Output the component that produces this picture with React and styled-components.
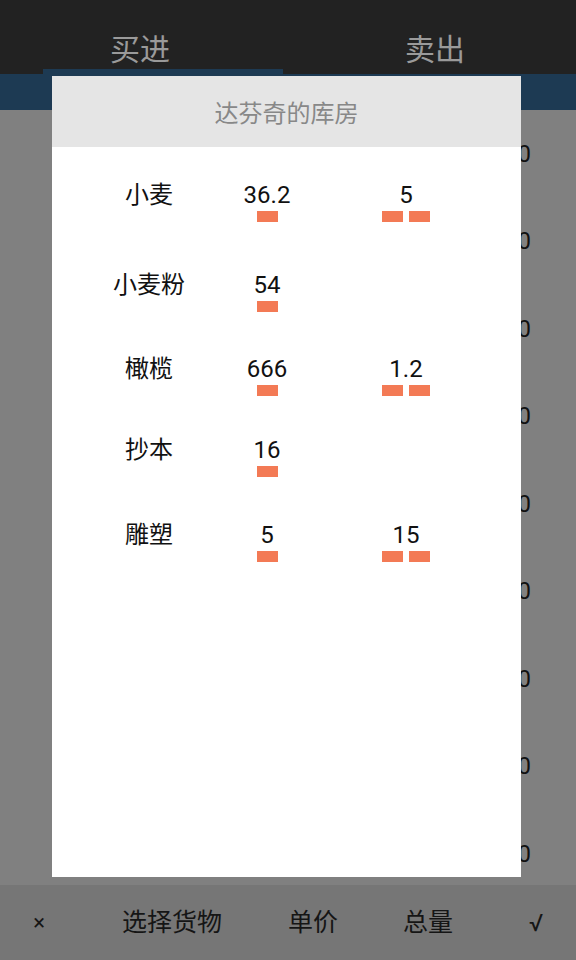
import React from "react";
import styled, { createGlobalStyle } from "styled-components";

const GlobalStyle = createGlobalStyle`
  html, body {
    margin: 0;
    padding: 0;
    background: #808080;
  }
  * {
    box-sizing: border-box;
  }
`;

const FONT = `Roboto, "Noto Sans CJK SC", sans-serif`;

const Page = styled.div`
  position: relative;
  width: 576px;
  height: 960px;
  display: flex;
  flex-direction: column;
  overflow: hidden;
  font-family: ${FONT};
  background: #808080;
`;

const TopBar = styled.div`
  height: 74px;
  display: flex;
  background: #222222;
`;

const Tab = styled.div`
  flex: 1;
  display: flex;
  flex-direction: column;
`;

const TabLabel = styled.div`
  height: 69px;
  padding-top: 32px;
  padding-left: ${(p) => p.$shift > 0 ? p.$shift : 0}px;
  padding-right: ${(p) => p.$shift < 0 ? -p.$shift : 0}px;
  text-align: center;
  font-size: 30px;
  line-height: 36px;
  color: #9a9a9a;
`;

const Indicator = styled.div`
  margin-left: 43px;
  width: 240px;
  height: 5px;
  background: #1d3a53;
`;

const BlueBand = styled.div`
  height: 36px;
  background: #1d3a53;
`;

const Content = styled.div`
  flex: 1;
  overflow: hidden;
  background: #808080;
`;

const BgRow = styled.div`
  height: 87.5px;
  display: flex;
  align-items: center;
  justify-content: flex-end;
  padding-right: 45px;
  font-size: 24px;
  color: #111;
`;

const BottomBar = styled.div`
  height: 75px;
  display: grid;
  grid-template-columns: 78px 188px 94px 136px 80px;
  align-items: center;
  background: #767676;
`;

const BottomItem = styled.div`
  text-align: center;
  font-size: ${(p) => p.$size || 25}px;
  line-height: 30px;
  color: #151515;
`;

const Dialog = styled.div`
  position: absolute;
  top: 76px;
  left: 52px;
  width: 469px;
  height: 801px;
  background: #ffffff;
  display: flex;
  flex-direction: column;
`;

const DialogHeader = styled.div`
  height: 71px;
  padding-top: 0;
  display: flex;
  align-items: center;
  justify-content: center;
  background: #e5e5e5;
  font-size: 24px;
  color: #888888;
`;

const DialogBody = styled.div`
  padding-top: 34px;
  display: flex;
  flex-direction: column;
`;

const Row = styled.div`
  height: ${(p) => p.$h}px;
  padding-left: 20px;
  display: grid;
  grid-template-columns: 154px 82px 196px;
  align-items: start;
`;

const Name = styled.div`
  text-align: center;
  font-size: 24px;
  line-height: 28px;
  color: #111;
`;

const Cell = styled.div`
  display: flex;
  flex-direction: column;
  align-items: center;
`;

const Value = styled.div`
  font-size: 24px;
  line-height: 28px;
  color: #111;
`;

const Bars = styled.div`
  margin-top: 2px;
  display: flex;
  gap: 6px;
`;

const Bar = styled.div`
  width: 21px;
  height: 11px;
  background: #f37a55;
`;

const goods = [
  { name: "小麦", a: "36.2", b: "5", h: 90 },
  { name: "小麦粉", a: "54", h: 84 },
  { name: "橄榄", a: "666", b: "1.2", h: 81 },
  { name: "抄本", a: "16", h: 85 },
  { name: "雕塑", a: "5", b: "15", h: 85 },
];

function ValueCell({ value, bars }) {
  if (!value) return <Cell />;
  return (
    <Cell>
      <Value>{value}</Value>
      <Bars>
        {Array.from({ length: bars }).map((_, i) => (
          <Bar key={i} />
        ))}
      </Bars>
    </Cell>
  );
}

export default function App() {
  return (
    <>
      <GlobalStyle />
      <Page>
        <TopBar>
          <Tab>
            <TabLabel $shift={-8}>买进</TabLabel>
            <Indicator />
          </Tab>
          <Tab>
            <TabLabel $shift={6}>卖出</TabLabel>
          </Tab>
        </TopBar>
        <BlueBand />
        <Content>
          {Array.from({ length: 9 }).map((_, i) => (
            <BgRow key={i}>100</BgRow>
          ))}
        </Content>
        <BottomBar>
          <BottomItem $size={22}>×</BottomItem>
          <BottomItem>选择货物</BottomItem>
          <BottomItem>单价</BottomItem>
          <BottomItem>总量</BottomItem>
          <BottomItem $size={24}>√</BottomItem>
        </BottomBar>

        <Dialog>
          <DialogHeader>达芬奇的库房</DialogHeader>
          <DialogBody>
            {goods.map((g) => (
              <Row key={g.name} $h={g.h}>
                <Name>{g.name}</Name>
                <ValueCell value={g.a} bars={1} />
                <ValueCell value={g.b} bars={2} />
              </Row>
            ))}
          </DialogBody>
        </Dialog>
      </Page>
    </>
  );
}
